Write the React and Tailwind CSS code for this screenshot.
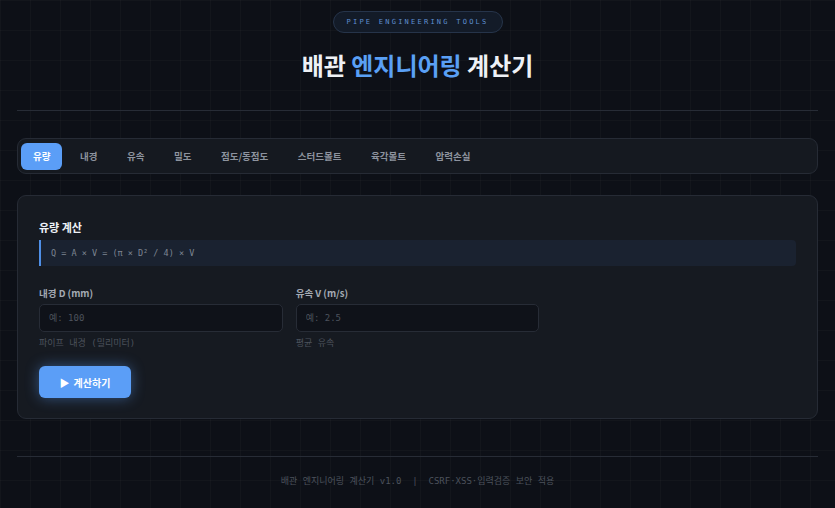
import React, { useState } from 'react';

const tabs = ['유량', '내경', '유속', '밀도', '점도/동점도', '스터드볼트', '육각볼트', '압력손실'];

const fields = [
  { label: '내경 D (mm)', placeholder: '예: 100', hint: '파이프 내경 (밀리미터)' },
  { label: '유속 V (m/s)', placeholder: '예: 2.5', hint: '평균 유속' },
];

const sans = "font-['Noto_Sans_CJK_KR','Noto_Sans',sans-serif]";
const mono = "font-['DejaVu_Sans_Mono','Noto_Sans_CJK_KR',monospace]";

export default function App() {
  const [active, setActive] = useState(0);

  return (
    <div
      className={`min-h-screen bg-[#0d1017] bg-[linear-gradient(rgba(255,255,255,0.025)_1px,transparent_1px),linear-gradient(90deg,rgba(255,255,255,0.025)_1px,transparent_1px)] bg-[size:30px_30px] px-[17px] pt-[11px] pb-[20px] ${sans}`}
    >
      {/* Header */}
      <div className="flex flex-col items-center border-b border-[#272c36] pb-[28px]">
        <div
          className={`flex h-[22px] w-[170px] items-center justify-center rounded-full border border-[#26344a] bg-[#131b28] text-[7px] tracking-[0.32em] text-[#5f8fd0] ${mono}`}
        >
          PIPE ENGINEERING TOOLS
        </div>
        <h1 className="mt-[15px] text-[24px] font-bold leading-[34px] text-[#eef1f6]">
          배관 <span className="text-[#5aa0f5]">엔지니어링</span> 계산기
        </h1>
      </div>

      {/* Tabs */}
      <div className="mt-[27px] flex h-[36px] items-center gap-[5.5px] rounded-[9px] border border-[#262b35] bg-[#151920] px-[3px]">
        {tabs.map((t, i) => (
          <button
            key={t}
            onClick={() => setActive(i)}
            className={`flex h-[27px] items-center rounded-[6px] px-[12px] text-[9.5px] font-bold ${
              i === active ? 'bg-[#5b9ef7] text-white' : 'text-[#8d939e]'
            }`}
          >
            {t}
          </button>
        ))}
      </div>

      {/* Card */}
      <div className="mt-[21px] rounded-[9px] border border-[#262b35] bg-[#161a21] px-[21px] pt-[23px] pb-[20px]">
        <h2 className="text-[11px] font-bold leading-[16px] text-[#eef1f6]">유량 계산</h2>
        <div
          className={`mt-[5px] flex h-[26px] items-center rounded-r-[4px] border-l-2 border-[#4f8fe6] bg-[#1a2230] pl-[10px] text-[8.5px] text-[#7d8592] ${mono}`}
        >
          Q = A × V = (π × D² / 4) × V
        </div>

        <div className="mt-[20px] grid grid-cols-3 gap-[13px]">
          {fields.map((f) => (
            <div key={f.label} className="flex flex-col">
              <label className="text-[9.5px] font-bold leading-[14px] text-[#a4aab4]">{f.label}</label>
              <input
                placeholder={f.placeholder}
                className={`mt-[4px] h-[28px] rounded-[5px] border border-[#272c36] bg-[#0f1219] px-[9px] text-[9px] text-[#c9ced6] placeholder:text-[#4d535d] outline-none ${mono}`}
              />
              <span className={`mt-[5px] text-[9px] leading-[13px] text-[#4c525c] ${mono}`}>{f.hint}</span>
            </div>
          ))}
        </div>

        <button className="mt-[16px] flex h-[32px] w-[92px] items-center justify-center gap-[4px] rounded-[6px] bg-[#5b9ef7] text-[10px] font-bold text-white shadow-[0_0_14px_rgba(91,158,247,0.45)]">
          <span className="text-[10px]">▶</span> 계산하기
        </button>
      </div>

      {/* Footer */}
      <div className={`mt-[37px] border-t border-[#272c36] pt-[18px] text-center text-[9px] leading-[13px] text-[#4c525c] ${mono}`}>
        배관 엔지니어링 계산기 v1.0 &nbsp;|&nbsp; CSRF·XSS·입력검증 보안 적용
      </div>
    </div>
  );
}
